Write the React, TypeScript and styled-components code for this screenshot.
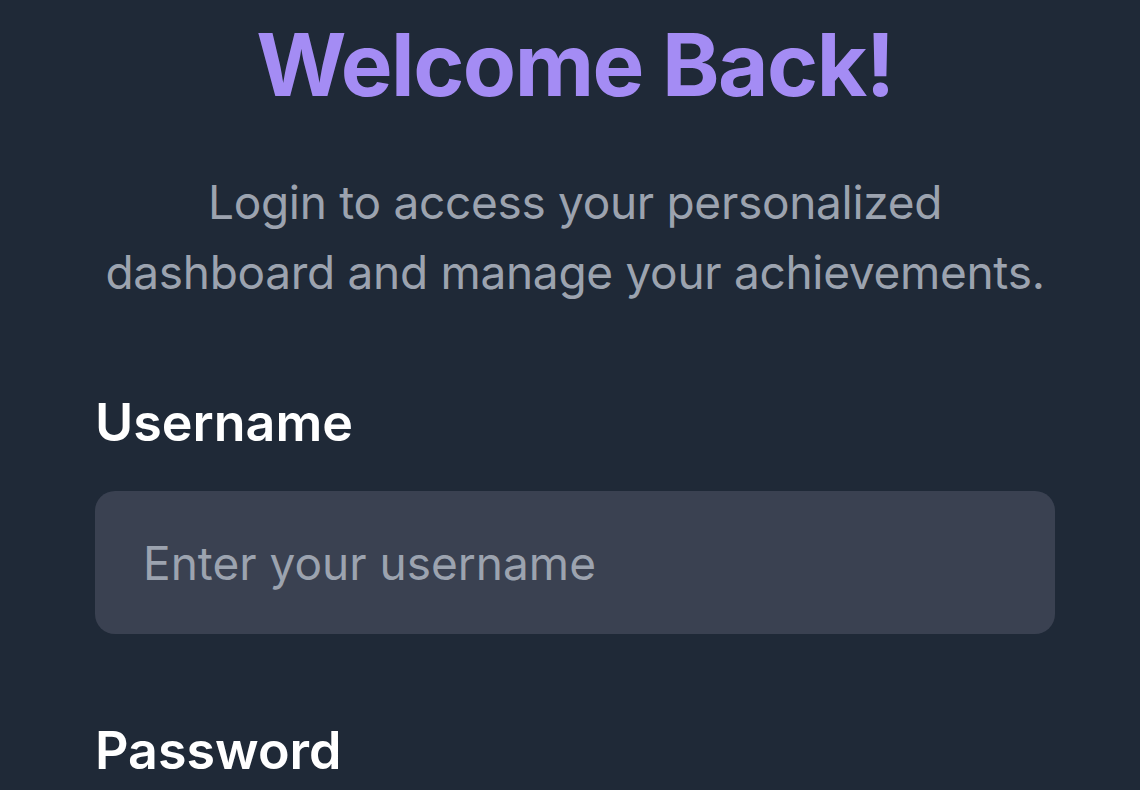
import React from "react";
import styled, { createGlobalStyle } from "styled-components";

const Global = createGlobalStyle`
  html, body { margin: 0; padding: 0; background: #1f2937; }
  body { font-family: Inter, "Noto Sans", sans-serif; -webkit-font-smoothing: antialiased; }
  * { box-sizing: border-box; }
`;

const Page = styled.main`
  height: 790px;
  background: #1f2937;
  padding: 6px 85px 0 95px;
  overflow: hidden;
`;

const Card = styled.section`
  width: 960px;
  display: flex;
  flex-direction: column;
`;

const Title = styled.h1`
  margin: 0;
  text-align: center;
  color: #a48cf4;
  font-size: 87px;
  line-height: 117px;
  font-weight: 700;
  letter-spacing: -1.5px;
`;

const Subtitle = styled.p`
  margin: 44px -20px 0;
  display: flex;
  flex-direction: column;
  align-items: center;
  color: #9ca3af;
  font-size: 46px;
  line-height: 70px;
  font-weight: 400;
  letter-spacing: -0.3px;
`;

const Line = styled.span`
  white-space: nowrap;
`;

const Form = styled.form`
  display: flex;
  flex-direction: column;
  gap: 85px;
  margin-top: 84px;
`;

const Field = styled.div`
  display: flex;
  flex-direction: column;
  gap: 36px;
`;

const Label = styled.label`
  color: #ffffff;
  font-size: 52px;
  line-height: 64px;
  font-weight: 600;
`;

const Input = styled.input`
  width: 100%;
  height: 143px;
  border: none;
  outline: none;
  border-radius: 20px;
  background: #3a4151;
  padding: 0 48px;
  font-family: Inter, "Noto Sans", sans-serif;
  font-size: 46px;
  color: #ffffff;
  &::placeholder { color: #9ca3af; }
`;

export default function App() {
  return (
    <>
      <Global />
      <Page>
        <Card>
          <Title>Welcome Back!</Title>
          <Subtitle>
            <Line>Login to access your personalized</Line>
            <Line>dashboard and manage your achievements.</Line>
          </Subtitle>
          <Form onSubmit={(e) => e.preventDefault()}>
            <Field>
              <Label htmlFor="username">Username</Label>
              <Input id="username" type="text" placeholder="Enter your username" />
            </Field>
            <Field>
              <Label htmlFor="password">Password</Label>
              <Input id="password" type="password" placeholder="Enter your password" />
            </Field>
          </Form>
        </Card>
      </Page>
    </>
  );
}
